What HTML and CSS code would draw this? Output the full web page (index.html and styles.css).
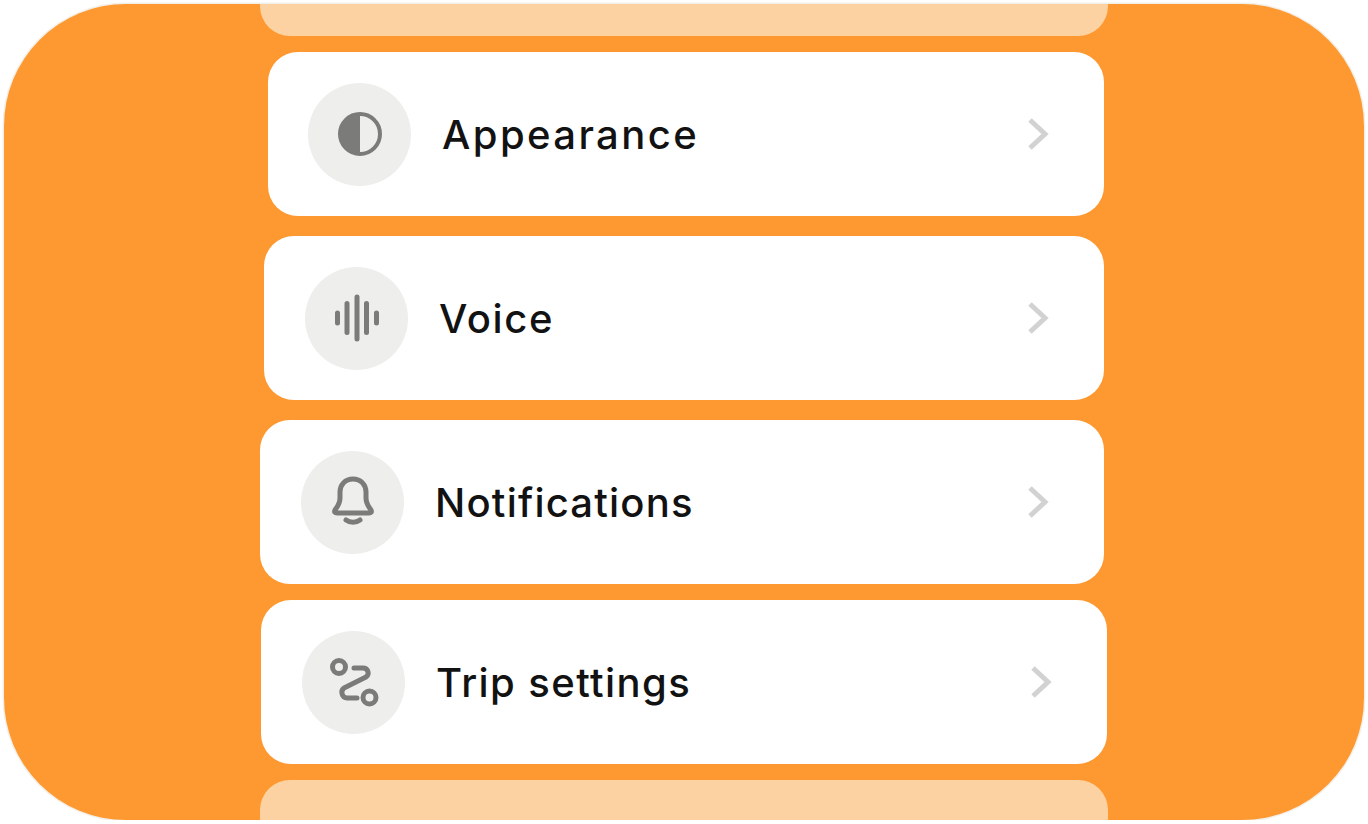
FILE: index.html
```html
<!DOCTYPE html>
<html lang="en">
<head>
    <meta charset="UTF-8">
    <meta name="viewport" content="width=device-width, initial-scale=1.0">
    <title>Settings</title>
    <link rel="stylesheet" href="styles.css">
</head>
<body>

<div class="frame">
    <div class="ghost ghostTop"></div>

    <div class="row rowAppearance">
        <span class="iconCircle">
            <svg class="icon" viewBox="0 0 60 60">
                <circle cx="30" cy="30" r="20" fill="none" stroke="#7b7b79" stroke-width="4"/>
                <path d="M30 10a20 20 0 0 0 0 40z" fill="#7b7b79"/>
            </svg>
        </span>
        <span class="label">Appearance</span>
        <svg class="chevron" viewBox="0 0 22 34"><path d="M3 3l15 14L3 31"/></svg>
    </div>

    <div class="row rowVoice">
        <span class="iconCircle">
            <svg class="icon" viewBox="0 0 60 60">
                <path class="line" d="M10.500 25v10M20 15.500v29M30 9v42M39.500 15.500v29M49.500 25v10"/>
            </svg>
        </span>
        <span class="label">Voice</span>
        <svg class="chevron" viewBox="0 0 22 34"><path d="M3 3l15 14L3 31"/></svg>
    </div>

    <div class="row rowNotifications">
        <span class="iconCircle">
            <svg class="icon" viewBox="0 0 60 60">
                <path class="line" d="M30 7c-8 0-13 6-13 13v6c0 6-3 9-5 12-1 2 0 3 2 3h32c2 0 3-1 2-3-2-3-5-6-5-12v-6c0-7-5-13-13-13z"/>
                <path class="line" d="M23 48c4 3 10 3 14 0"/>
            </svg>
        </span>
        <span class="label">Notifications</span>
        <svg class="chevron" viewBox="0 0 22 34"><path d="M3 3l15 14L3 31"/></svg>
    </div>

    <div class="row rowTrip">
        <span class="iconCircle">
            <svg class="icon" viewBox="0 0 60 60">
                <circle class="line" cx="15" cy="15" r="6.500"/>
                <circle class="line" cx="45.500" cy="45.500" r="6.500"/>
                <path class="line" d="M30 16h9c5 0 7 6 3 9L20 36c-4 3-2 10 3 10h10"/>
            </svg>
        </span>
        <span class="label">Trip settings</span>
        <svg class="chevron" viewBox="0 0 22 34"><path d="M3 3l15 14L3 31"/></svg>
    </div>

    <div class="ghost ghostBottom"></div>
</div>

</body>
</html>
```

FILE: styles.css
```css
body {
    background: #ffffff;
    margin: 0;
    padding: 0;
    font-family: "Inter", "Noto Sans", sans-serif;
}

.frame {
    box-sizing: border-box;
    width: 1360px;
    height: 816px;
    margin: 4px 0 0 4px;
    padding-left: 256px;
    box-shadow: 0 0 0 1.5px #f3f0e8;
    border-radius: 122px;
    background: #fe9932;
    display: flex;
    flex-direction: column;
    align-items: flex-start;
    gap: 16px;
    overflow: hidden;
}

.ghost {
    flex: none;
    width: 848px;
    background: #fdd2a2;
}

.ghostTop {
    height: 32px;
    border-radius: 0 0 30px 30px;
}

.ghostBottom {
    height: 40px;
    border-radius: 30px 30px 0 0;
}

.row {
    box-sizing: border-box;
    flex: none;
    height: 164px;
    padding: 0 55px 0 41px;
    border-radius: 30px;
    background: #ffffff;
    display: flex;
    align-items: center;
}

.rowAppearance {
    margin-left: 8px;
    width: 836px;
    padding-left: 40px;
}

.rowVoice {
    margin-top: 4px;
    margin-left: 4px;
    width: 840px;
}

.rowNotifications {
    margin-top: 4px;
    width: 844px;
}

.rowTrip {
    margin-left: 1px;
    width: 846px;
}

.iconCircle {
    flex: none;
    width: 103px;
    height: 103px;
    border-radius: 50%;
    background: #eeeeec;
    display: flex;
    justify-content: center;
    align-items: center;
}

.icon {
    width: 60px;
    height: 60px;
}

.line {
    fill: none;
    stroke: #7b7b79;
    stroke-width: 5;
    stroke-linecap: round;
    stroke-linejoin: round;
}

.label {
    margin-left: 31px;
    font-size: 40px;
    font-weight: 500;
    color: #121212;
}

.rowAppearance .label {
    letter-spacing: 2.4px;
}

.rowVoice .label {
    letter-spacing: 1.6px;
}

.rowNotifications .label {
    letter-spacing: 1.2px;
}

.rowTrip .label {
    letter-spacing: 1.4px;
}

.chevron {
    flex: none;
    width: 22px;
    height: 34px;
    margin-left: auto;
    fill: none;
    stroke: #d2d2d2;
    stroke-width: 5;
}
```
